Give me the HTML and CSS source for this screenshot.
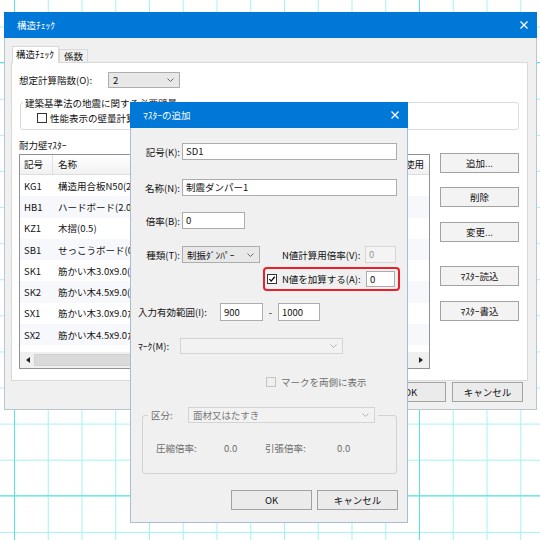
FILE: index.html
```html
<!DOCTYPE html>
<html lang="ja">
<head>
<meta charset="utf-8">
<title>構造ﾁｪｯｸ</title>
<link rel="stylesheet" href="styles.css">
</head>
<body>
<div class="desk">
  <section class="win main-win">
    <div class="titlebar">
      <span class="title">構造ﾁｪｯｸ</span>
      <svg class="close" viewBox="0 0 8 8"><path d="M0.5 0.5L7.5 7.5M7.5 0.5L0.5 7.5"/></svg>
    </div>
    <div class="wbody">
      <div class="tabs">
        <div class="tab active">構造ﾁｪｯｸ</div>
        <div class="tab">係数</div>
      </div>
      <div class="panel">
        <div class="row-floors">
          <span class="lbl-floors">想定計算階数(O):</span>
          <div class="combo combo-floors"><span class="cval">2</span><svg class="dd" viewBox="0 0 7 4"><path d="M0.5 0.5L3.5 3.5L6.5 0.5"/></svg></div>
        </div>
        <fieldset class="grp grp-law">
          <legend>建築基準法の地震に関する必要壁量</legend>
          <div class="chk-row"><span class="cbox"></span><span class="chk-text">性能表示の壁量計算を行う</span></div>
        </fieldset>
        <div class="cap">耐力壁ﾏｽﾀｰ</div>
        <div class="master">
          <div class="list">
            <div class="lhead">
              <div class="c-code">記号</div><div class="c-name">名称</div><div class="c-use">使用</div>
            </div>
            <div class="lbody">
              <div class="lrow"><div class="c-code">KG1</div><div class="c-name">構造用合板N50(2.5)</div></div>
              <div class="lrow alt"><div class="c-code">HB1</div><div class="c-name">ハードボード(2.0)</div></div>
              <div class="lrow"><div class="c-code">KZ1</div><div class="c-name">木摺(0.5)</div></div>
              <div class="lrow alt"><div class="c-code">SB1</div><div class="c-name">せっこうボード(0.9)</div></div>
              <div class="lrow"><div class="c-code">SK1</div><div class="c-name">筋かい木3.0x9.0(1.5)</div></div>
              <div class="lrow alt"><div class="c-code">SK2</div><div class="c-name">筋かい木4.5x9.0(2.0)</div></div>
              <div class="lrow"><div class="c-code">SX1</div><div class="c-name">筋かい木3.0x9.0たすき</div></div>
              <div class="lrow alt"><div class="c-code">SX2</div><div class="c-name">筋かい木4.5x9.0たすき</div></div>
            </div>
            <div class="hscroll">
              <svg class="sarr" viewBox="0 0 4 6"><path d="M4 0L0 3L4 6Z"/></svg>
              <div class="thumb"></div>
              <svg class="sarr" viewBox="0 0 4 6"><path d="M0 0L4 3L0 6Z"/></svg>
            </div>
          </div>
          <div class="side-btns">
            <button class="btn b-add">追加...</button>
            <button class="btn b-del">削除</button>
            <button class="btn b-chg">変更...</button>
            <button class="btn b-read">ﾏｽﾀｰ読込</button>
            <button class="btn b-write">ﾏｽﾀｰ書込</button>
          </div>
        </div>
      </div>
      <div class="foot">
        <button class="btn fbtn">OK</button>
        <button class="btn fbtn">キャンセル</button>
      </div>
    </div>
  </section>

  <section class="win sub-win">
    <div class="titlebar">
      <span class="title">ﾏｽﾀｰの追加</span>
      <svg class="close" viewBox="0 0 8 8"><path d="M0.5 0.5L7.5 7.5M7.5 0.5L0.5 7.5"/></svg>
    </div>
    <div class="sbody">
      <div class="frow r1"><span class="flbl">記号(K):</span><div class="inp w-long">SD1</div></div>
      <div class="frow r2"><span class="flbl">名称(N):</span><div class="inp w-long">制震ダンパー1</div></div>
      <div class="frow r3"><span class="flbl">倍率(B):</span><div class="inp w-rate">0</div></div>
      <div class="frow r4">
        <span class="flbl">種類(T):</span>
        <div class="combo w-kind"><span class="cval">制振ﾀﾞﾝﾊﾟｰ</span><svg class="dd" viewBox="0 0 7 4"><path d="M0.5 0.5L3.5 3.5L6.5 0.5"/></svg></div>
        <span class="lbl-nrate">N値計算用倍率(V):</span>
        <div class="inp disabled w-nrate">0</div>
      </div>
      <div class="hl-box">
        <span class="cbox checked"><svg viewBox="0 0 10 10"><path d="M1.8 5.2L4 7.6L8.4 2.2"/></svg></span>
        <span class="lbl-add">N値を加算する(A):</span>
        <div class="inp w-add">0</div>
      </div>
      <div class="frow r6">
        <span class="lbl-range">入力有効範囲(I):</span>
        <div class="inp w-r1">900</div>
        <span class="dash">-</span>
        <div class="inp w-r2">1000</div>
      </div>
      <div class="frow r7">
        <span class="lbl-mark">ﾏｰｸ(M):</span>
        <div class="combo disabled w-mark"><span class="cval"></span><svg class="dd" viewBox="0 0 7 4"><path d="M0.5 0.5L3.5 3.5L6.5 0.5"/></svg></div>
      </div>
      <div class="frow r8">
        <span class="cbox disabled"></span>
        <span class="dis-text both">マークを両側に表示</span>
      </div>
      <fieldset class="grp grp-kind">
        <legend>
          <span class="lbl-cls">区分:</span>
          <div class="combo disabled w-cls"><span class="cval">面材又はたすき</span><svg class="dd" viewBox="0 0 7 4"><path d="M0.5 0.5L3.5 3.5L6.5 0.5"/></svg></div>
        </legend>
        <div class="ratio-row">
          <span class="r-l1">圧縮倍率:</span><span class="r-v1">0.0</span>
          <span class="r-l2">引張倍率:</span><span class="r-v2">0.0</span>
        </div>
      </fieldset>
      <div class="sfoot">
        <button class="btn sbtn">OK</button>
        <button class="btn sbtn">キャンセル</button>
      </div>
    </div>
  </section>
</div>
</body>
</html>
```

FILE: styles.css
```css
* { box-sizing: border-box; }
html, body { margin: 0; padding: 0; }
body {
  width: 540px;
  height: 540px;
  overflow: hidden;
  font-family: "Noto Sans CJK JP", "Noto Sans", sans-serif;
  font-size: 9.5px;
  color: #111;
}

.desk {
  position: relative;
  width: 540px;
  height: 540px;
  overflow: hidden;
  background-color: #fff;
  background-image:
    linear-gradient(90deg, #58e2e2 1px, transparent 1px),
    linear-gradient(180deg, #58e2e2 1px, transparent 1px),
    linear-gradient(90deg, #a4f3f3 1px, transparent 1px),
    linear-gradient(180deg, #a4f3f3 1px, transparent 1px);
  background-size: 405px 100%, 100% 433.2px, 33.75px 100%, 100% 36.1px;
  background-position: 14px 0, 0 62px, 14px 0, 0 26.6px;
}

/* windows */
.win {
  position: absolute;
  display: flex;
  flex-direction: column;
  background: #f0f0f0;
  border: 1px solid #b7c5d4;
  border-top: 0;
}
.main-win { left: 4px; top: 12px; width: 533px; height: 398px; }
.sub-win { left: 130px; top: 102px; width: 278px; height: 421px; border-color: #a8bdd3; }

.titlebar {
  flex: none;
  height: 26px;
  margin: 0 -1px;
  background: #0078d7;
  color: #fff;
  display: flex;
  align-items: center;
  justify-content: space-between;
  padding: 0 9px 0 13px;
}
.title { line-height: 12px; }
.close { width: 8px; height: 8px; }
.close path { stroke: #fff; stroke-width: 1.4; fill: none; }

/* main body */
.wbody {
  flex: 1;
  display: flex;
  flex-direction: column;
  padding: 8px 8px 0 6px;
}
.tabs {
  height: 16px;
  display: flex;
  align-items: flex-end;
}
.tab {
  height: 13px;
  border: 1px solid #d9d9d9;
  border-bottom: 0;
  background: #f0f0f0;
  padding: 0 4px;
  line-height: 12px;
}
.tab.active {
  height: 17px;
  margin-bottom: -1px;
  margin-left: 1px;
  background: #fff;
  position: relative;
  z-index: 1;
  padding: 0 4px 0 3px;
  line-height: 15px;
}
.panel {
  height: 319px;
  background: #fff;
  border: 1px solid #d9d9d9;
  padding: 9px 0 0 7px;
  display: flex;
  flex-direction: column;
}
.row-floors { height: 16px; display: flex; align-items: center; }
.lbl-floors { width: 89px; line-height: 12px; }

.combo {
  height: 16px;
  background: #e8e8e8;
  border: 1px solid #adadad;
  display: flex;
  align-items: center;
  justify-content: space-between;
  padding: 0 5px 0 4px;
  line-height: 12px;
  white-space: nowrap;
}
.combo.disabled { background: #f2f2f2; border-color: #d4d4d4; color: #7a7a7a; }
.dd { width: 7px; height: 4px; flex: none; }
.dd path { stroke: #6b6b6b; stroke-width: 1; fill: none; }
.combo.disabled .dd path { stroke: #b5b5b5; }
.combo-floors { width: 72px; }

.grp {
  margin: 0;
  border: 1px solid #dcdcdc;
  border-radius: 3px;
  min-width: 0;
}
.grp-law {
  width: 499px;
  margin: 7px 0 0 1px;
  padding: 3px 0 5px 16px;
}
.grp-law legend {
  padding: 2px 2px 0;
  margin-left: -14px;
  line-height: 12px;
}
.chk-row { height: 12px; display: flex; align-items: center; }
.cbox {
  width: 10px;
  height: 10px;
  flex: none;
  border: 1px solid #333;
  background: #fff;
  display: inline-flex;
}
.cbox svg { width: 8px; height: 8px; }
.cbox svg path { stroke: #000; stroke-width: 1.6; fill: none; }
.cbox.disabled { border-color: #c4c4c4; background: #efefef; }
.chk-text { margin-left: 3px; line-height: 12px; white-space: nowrap; }

.cap { margin-top: 9px; line-height: 12px; height: 12px; }
.master { margin-top: 3px; display: flex; align-items: flex-start; }

.list {
  width: 411px;
  height: 215px;
  border: 1px solid #8d9199;
  display: flex;
  flex-direction: column;
  overflow: hidden;
}
.lhead {
  height: 20px;
  flex: none;
  display: flex;
  background: linear-gradient(#ffffff, #f1f1f1);
  border-bottom: 1px solid #dedede;
  line-height: 19px;
}
.c-code { width: 33px; flex: none; padding-left: 4px; white-space: nowrap; }
.c-name { flex: 1; padding-left: 5px; white-space: nowrap; }
.c-use { width: 30px; flex: none; padding-left: 5px; white-space: nowrap; }
.lhead .c-code { border-right: 1px solid #e0e0e0; }
.lhead .c-use { border-left: 1px solid #e0e0e0; }
.lbody { flex: 1; display: flex; flex-direction: column; }
.lrow { height: 21.3px; display: flex; align-items: center; line-height: 12px; }
.lrow.alt { background: #f6f8fb; }
.hscroll {
  height: 16px;
  flex: none;
  background: #f0f0f0;
  display: flex;
  align-items: center;
  padding: 0 6px;
}
.sarr { width: 4px; height: 6px; flex: none; }
.sarr path { fill: #222; }
.thumb {
  height: 12px;
  margin: 0 auto 0 4px;
  width: 365px;
  background: #dadada;
  border: 1px solid #cfcfcf;
  border-radius: 1px;
}

.btn {
  font: inherit;
  color: #111;
  background: #ebebeb;
  border: 1px solid #a2a2a2;
  border-radius: 0;
  padding: 0;
  height: 20px;
  line-height: 18px;
  text-align: center;
  white-space: nowrap;
}
.side-btns {
  margin-left: 10px;
  margin-top: -1px;
  width: 79px;
  display: flex;
  flex-direction: column;
}
.side-btns .btn { width: 79px; background: #f3f3f3; }
.b-del { margin-top: 14px; }
.b-chg { margin-top: 15px; }
.b-read { margin-top: 24px; }
.b-write { margin-top: 15px; }

.foot {
  display: flex;
  justify-content: flex-end;
  gap: 6px;
  padding-right: 5px;
  margin-top: 1px;
}
.fbtn { width: 71px; }

/* sub dialog body */
.sbody { flex: 1; display: flex; flex-direction: column; }
.frow { display: flex; align-items: center; }
.flbl { width: 49px; text-align: right; margin-right: 2px; line-height: 12px; white-space: nowrap; }
.inp {
  height: 17px;
  background: #fff;
  border: 1px solid #acacac;
  padding: 0 3px;
  line-height: 15px;
  white-space: nowrap;
  overflow: hidden;
}
.inp.disabled { background: #f4f4f4; border-color: #d6d6d6; color: #9a9a9a; }
.r1 { margin-top: 15px; height: 17px; }
.r2 { margin-top: 19px; height: 17px; }
.r3 { margin-top: 16px; height: 17px; }
.r4 { margin-top: 17px; height: 17px; }
.w-long { width: 215px; }
.w-rate { width: 63px; }
.w-kind { width: 78px; height: 17px; }
.lbl-nrate { margin-left: 22px; width: 80px; margin-right: 3px; white-space: nowrap; line-height: 12px; }
.w-nrate { width: 31px; }

.hl-box {
  margin: 4px 0 0 132px;
  width: 137px;
  height: 24px;
  border: 2px solid #e8202a;
  border-radius: 4px;
  display: flex;
  align-items: center;
  padding-left: 2px;
}
.lbl-add { margin-left: 5px; width: 81px; margin-right: 3px; white-space: nowrap; line-height: 12px; }
.w-add { width: 29px; height: 16px; line-height: 14px; }

.r6 { margin-top: 12px; height: 18px; padding-left: 7px; }
.r6 .inp { height: 18px; line-height: 16px; }
.lbl-range { width: 79px; margin-right: 3px; white-space: nowrap; line-height: 12px; }
.w-r1 { width: 43px; }
.w-r2 { width: 42px; }
.dash { width: 15px; text-align: center; line-height: 12px; }

.r7 { margin-top: 17px; height: 16px; padding-left: 7px; }
.lbl-mark { width: 39px; margin-right: 3px; white-space: nowrap; line-height: 12px; }
.w-mark { width: 163px; }

.r8 { margin-top: 22px; height: 12px; padding-left: 135px; }
.dis-text { color: #6d6d6d; line-height: 12px; white-space: nowrap; }
.both { margin-left: 5px; }

.grp-kind {
  width: 255px;
  margin: 19px 0 0 11px;
  padding: 19px 0 19px 13px;
  border-color: #d2d2d2;
}
.grp-kind legend {
  display: flex;
  align-items: center;
  margin-left: -8px;
  padding: 0 3px;
  height: 16px;
  color: #6d6d6d;
}
.lbl-cls { width: 37px; line-height: 12px; }
.w-cls { width: 187px; }
.ratio-row { display: flex; height: 12px; line-height: 12px; color: #6d6d6d; white-space: nowrap; }
.r-l1 { width: 68px; }
.r-v1 { width: 41px; }
.r-l2 { width: 72px; }

.sfoot { display: flex; gap: 5px; margin: 16px 0 0 100px; }
.sbtn { width: 81px; }
```
